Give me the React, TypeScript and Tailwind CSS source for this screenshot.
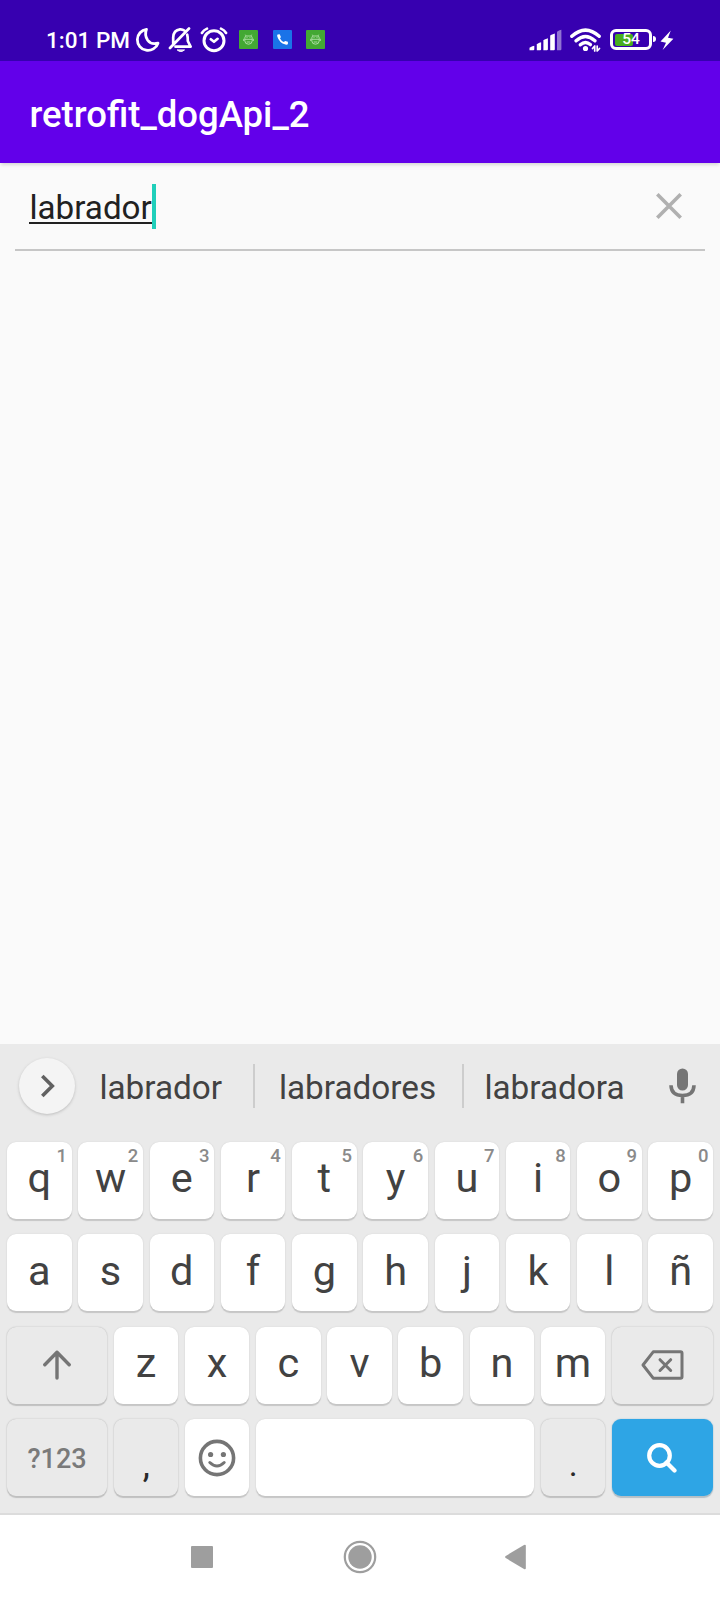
import React from "react";

type LetterKey = { label: string; hint?: string };

const topRow: LetterKey[] = [..."qwertyuiop"].map((label, i) => ({ label, hint: String((i + 1) % 10) }));
const homeRow: LetterKey[] = [..."asdfghjklñ"].map((label) => ({ label }));
const bottomRow: LetterKey[] = [..."zxcvbnm"].map((label) => ({ label }));

const keyBase = "relative flex h-[77px] justify-center rounded-[9px]";
const lightKey = `${keyBase} items-center bg-white text-[#424242] shadow-[0_1.5px_1px_#c6c6c6,0_0_1.5px_#cfcfcf]`;
const darkKey = `${keyBase} bg-[#eaeaea] shadow-[0_1.5px_1px_#c0c0c0,0_0_1.5px_#b0b0b0]`;

function Letter({ label, hint }: LetterKey) {
  return (
    <button className={`${lightKey} w-[64.5px] pb-[5px] text-[41.5px] leading-none`}>
      {label}
      {hint && <span className="absolute right-[4.5px] top-[4.5px] text-[18.5px] font-medium leading-[18px] text-[#8a8a8a]">{hint}</span>}
    </button>
  );
}

function DebugBadge() {
  return (
    <svg className="h-[19px] w-[19px]" viewBox="0 0 19 19">
      <rect width="19" height="19" rx="1" fill="#43a833" />
      <g fill="none" stroke="#c4e8bb" strokeWidth="0.8">
        <path d="M5.8 8.2Q5.8 6.2 7 6H12Q13.2 6.2 13.2 8.2V11Q13 14.2 9.5 14.2T5.8 11ZM5.8 9.3H13.2M6.9 5.8L6.3 4.7M12.1 5.8L12.7 4.7M7.6 12H11.4M4.7 8.8V11M14.3 8.8V11" />
        <path d="M7.5 7.6h1M10.5 7.6h1" />
      </g>
    </svg>
  );
}

function StatusBar() {
  return (
    <header className="flex h-[61px] items-start bg-[#3700b0] pl-[46px] pt-[27px] text-white">
      <span className="w-[88.5px] whitespace-nowrap pt-[1px] text-[22.5px] font-medium leading-[25px]">1:01 PM</span>
      <svg className="h-[26px] w-[26px]" viewBox="0 0 26 26" fill="none" stroke="white" strokeWidth="2.8" strokeLinejoin="round">
        <path d="M11.5 2.3A10.6 10.6 0 1 0 23 16.2Q16 18 12.7 13.3Q9.2 8 11.5 2.3Z" />
      </svg>
      <svg className="ml-[7.5px] h-[26px] w-[26px]" viewBox="0 0 26 26" fill="none" stroke="white" strokeWidth="2.7" strokeLinecap="round" strokeLinejoin="round">
        <path d="M2 21L21 1.5M5.2 16.5V10.5Q5.5 3 12 2.3Q14.5 2.1 16.2 3.6M19.2 7.7Q19.8 9.5 19.8 14L22.6 19.7H7.5" />
        <path d="M9.5 23.2Q12.8 26 16.2 23.2Z" fill="white" strokeWidth="1" />
      </svg>
      <svg className="ml-[6px] h-[26px] w-[28px]" viewBox="0 0 28 26" fill="none" stroke="white" strokeLinecap="round">
        <circle cx="14" cy="13.7" r="10" strokeWidth="3" />
        <path d="M10.8 12.2L14 14.8L17.6 11.8M1.9 6Q3.7 2.8 7 1.6M26.1 6Q24.3 2.8 21 1.6" strokeLinejoin="round" strokeWidth="2.6" />
      </svg>
      <div className="ml-[11px] flex gap-[14.5px] pt-[3px]">
        <DebugBadge />
        <svg className="h-[19px] w-[19px]" viewBox="0 0 19 19">
          <rect width="19" height="19" rx="1" fill="#1a73e8" />
          <path d="M6.7 4.3L4.6 4.4Q3.9 5 4.3 6.4Q6 12.5 12.5 14.6Q14.6 14.9 14.9 13.9V11.8L12.2 10.9L10.8 12.1Q8.3 10.8 7 8.4L7.9 7.1Z" fill="white" />
        </svg>
        <DebugBadge />
      </div>
      <svg className="ml-[203.5px] mt-[2px] h-[22px] w-[33px]" viewBox="0 0 33 22" fill="white">
        <path d="M0.5 21.3V18.8Q0.8 18 5.3 16.7V20.3Q5.3 21.3 4.3 21.3Z" />
        <path d="M7.8 21.3V15.4Q8 14.6 12.1 13.3V20.3Q12.1 21.3 11.1 21.3Z" />
        <path d="M14.4 21.3V11.5Q14.6 10.6 18.9 9.2V20.3Q18.9 21.3 17.9 21.3Z" />
        <path d="M21.2 21.3V6.8Q21.4 6 25.8 4.6V20.3Q25.8 21.3 24.8 21.3Z" />
        <path d="M28 21.3V3Q28.2 2 32.4 0.8V20.3Q32.4 21.3 31.4 21.3Z" opacity="0.45" />
      </svg>
      <svg className="ml-[8px] mt-[1px] h-[26px] w-[31px]" viewBox="0 0 31 26" fill="none" stroke="white" strokeWidth="3.4" strokeLinecap="round">
        <path d="M1.8 8.3Q15.5 -4.1 29.2 8.3M6.1 12.8Q15.5 4.4 24.9 12.8" />
        <path d="M10.3 16.8Q15.5 12.2 20.4 16.6" />
        <circle cx="15.5" cy="20.5" r="1.5" fill="white" strokeWidth="2.2" />
        <path d="M22.5 20.5L24.7 18V23M27.2 18V23L29.5 20.5" strokeWidth="1.7" strokeLinejoin="round" />
      </svg>
      <div className="relative ml-[9.5px] mt-[2px] flex h-[21px] w-[42px] items-center justify-center rounded-[6px] border-[3px] border-white">
        <div className="absolute left-[1.5px] top-[1.5px] h-[12px] w-[18px] rounded-[2px] bg-[#48ae20]" />
        <span className="relative pt-[1px] text-[15.5px] font-medium leading-none">54</span>
      </div>
      <div className="ml-[1px] mt-[9px] h-[6px] w-[2.5px] rounded-r bg-white" />
      <svg className="ml-[4.5px] mt-[3px] h-[21px] w-[14px]" viewBox="0 0 14 21" fill="white">
        <path d="M10.8 0.5L0.5 11.6L6 12.7L2.6 20L13.4 8.8L8 7.7Z" />
      </svg>
    </header>
  );
}

function SearchField() {
  return (
    <section className="mx-[15px] flex h-[88px] items-start justify-between border-b-2 border-[#c6c6c6] pl-[14px] pr-[22px]">
      <div className="flex pt-[21px]">
        <span className="h-[40px] border-b-2 border-[#212121] pl-[0.5px] text-[33.2px] leading-[47px] text-[#212121]">labrador</span>
        <span className="h-[45px] w-[4px] bg-[#1fcfba]" />
      </div>
      <svg className="mt-[29px] h-[28px] w-[28px]" viewBox="0 0 28 28" fill="none" stroke="#b0b0b0" strokeWidth="3.6">
        <path d="M2.3 2.3L25.7 25.7M25.7 2.3L2.3 25.7" />
      </svg>
    </section>
  );
}

function Suggestions() {
  return (
    <div className="flex h-[98px] items-start pt-[14px] text-[33.3px] leading-[59px] text-[#424242]">
      <button className="ml-[18.5px] flex h-[56px] w-[56px] items-center justify-center rounded-full bg-[#f4f4f4] pl-[2px] shadow-[0_1px_3px_#bdbdbd]">
        <svg className="h-[24px] w-[16px]" viewBox="0 0 16 24" fill="none" stroke="#616161" strokeWidth="3.6">
          <path d="M2.3 2L12.3 12L2.3 22" />
        </svg>
      </button>
      <span className="w-[172.5px] text-center">labrador</span>
      <span className="ml-[6px] mt-[6px] h-[44px] w-[2px] bg-[#cdcdcd]" />
      <span className="w-[205px] text-center">labradores</span>
      <span className="ml-[2px] mt-[6px] h-[44px] w-[2px] bg-[#cdcdcd]" />
      <span className="w-[181px] text-center">labradora</span>
      <svg className="ml-[24px] mt-[10px] h-[36px] w-[27px]" viewBox="0 0 27 36">
        <rect x="8" y="0.5" width="11" height="22" rx="5.5" fill="#757575" />
        <path d="M2 17.2Q2.3 27.5 13.5 27.5T25 17.2M13.5 27.5V35.3" fill="none" stroke="#757575" strokeWidth="3.6" />
      </svg>
    </div>
  );
}

function Keyboard() {
  return (
    <section className="flex h-[471px] flex-col border-b-2 border-[#dcdcdc] bg-[#eaeaea]">
      <Suggestions />
      <div className="flex flex-col gap-[15.4px] px-[7px]">
        <div className="flex justify-between">{topRow.map((k) => <Letter key={k.label} {...k} />)}</div>
        <div className="flex justify-between">{homeRow.map((k) => <Letter key={k.label} {...k} />)}</div>
        <div className="flex justify-between">
          <button className={`${darkKey} w-[100px] items-center`}>
            <svg className="h-[30px] w-[28px]" viewBox="0 0 28 30" fill="none" stroke="#757575" strokeWidth="3.4" strokeLinecap="round" strokeLinejoin="round">
              <path d="M14 28V2.3M1.8 14.7L14 2.3L26.2 14.7" />
            </svg>
          </button>
          {bottomRow.map((k) => <Letter key={k.label} {...k} />)}
          <button className={`${darkKey} w-[101px] items-center`}>
            <svg className="h-[30px] w-[43px]" viewBox="0 0 43 30" fill="none" stroke="#757575" strokeWidth="3" strokeLinejoin="round">
              <path d="M12.2 1.8H39.5Q41 1.8 41 3.3V26.7Q41 28.2 39.5 28.2H12.2L2 15Z" />
              <path d="M19 9.7L29.7 20.5M29.7 9.7L19 20.5" strokeLinecap="round" />
            </svg>
          </button>
        </div>
        <div className="flex justify-between">
          <button className={`${darkKey} w-[100px] items-center pt-[4px] text-[27px] font-medium text-[#7a7a7a]`}>?123</button>
          <button className={`${darkKey} w-[64.5px] items-end pb-[10px] pl-[1px] text-[36px] leading-[42px] text-[#2a2a2a]`}>,</button>
          <button className={`${lightKey} w-[64.5px]`}>
            <svg className="h-[38px] w-[38px]" viewBox="0 0 38 38" fill="none" stroke="#757575" strokeWidth="3.6">
              <circle cx="19" cy="19" r="16.6" />
              <path d="M11.8 23.5Q19 30.5 26.2 23.5" strokeLinecap="round" strokeWidth="3" />
              <circle cx="12.6" cy="15.5" r="2.6" fill="#757575" stroke="none" />
              <circle cx="25.4" cy="15.5" r="2.6" fill="#757575" stroke="none" />
            </svg>
          </button>
          <button aria-label="space" className={`${lightKey} w-[278.8px]`} />
          <button className={`${darkKey} w-[64.5px] items-end pb-[11px] text-[34px] leading-[42px] text-[#2a2a2a]`}>.</button>
          <button className="flex h-[77px] w-[101px] items-center justify-center rounded-[9px] bg-[#2ea5e5] shadow-[0_1.5px_1px_#b4bfc6,0_0_1.5px_#8bb8d0]">
            <svg className="h-[30px] w-[31px]" viewBox="0 0 31 30" fill="none" stroke="white" strokeWidth="4.2">
              <circle cx="12.5" cy="12.5" r="10.3" />
              <path d="M19.5 19.5L27.5 27.5" strokeLinecap="round" />
            </svg>
          </button>
        </div>
      </div>
    </section>
  );
}

export default function App() {
  return (
    <div className="flex h-[1600px] w-[720px] flex-col overflow-hidden bg-[#fafafa] font-[Roboto,sans-serif]">
      <StatusBar />
      <div className="flex h-[102px] items-center bg-[#6200ea] pl-[29.5px] pt-[6px] text-[36.5px] font-medium text-white shadow-[0_3px_3px_-1px_#d8d8d8]">
        retrofit_dogApi_2
      </div>
      <SearchField />
      <main className="grow" />
      <Keyboard />
      <nav className="flex h-[85px] items-start bg-white">
        <div className="ml-[191px] mt-[31px] h-[22px] w-[22px] rounded-[1px] bg-[#9e9e9e]" />
        <svg className="ml-[130px] mt-[25px] h-[34px] w-[34px]" viewBox="0 0 34 34">
          <circle cx="17" cy="17" r="15.2" fill="none" stroke="#9e9e9e" strokeWidth="2.2" />
          <circle cx="17" cy="17" r="11.7" fill="#9e9e9e" />
        </svg>
        <svg className="ml-[127px] mt-[29px] h-[26px] w-[22px]" viewBox="0 0 22 26" fill="#9e9e9e">
          <path d="M21.8 1.5V24.5Q21.5 25.6 20 25L1.7 14Q0.5 13 1.7 12L20 1Q21.5 0.4 21.8 1.5Z" />
        </svg>
      </nav>
    </div>
  );
}
